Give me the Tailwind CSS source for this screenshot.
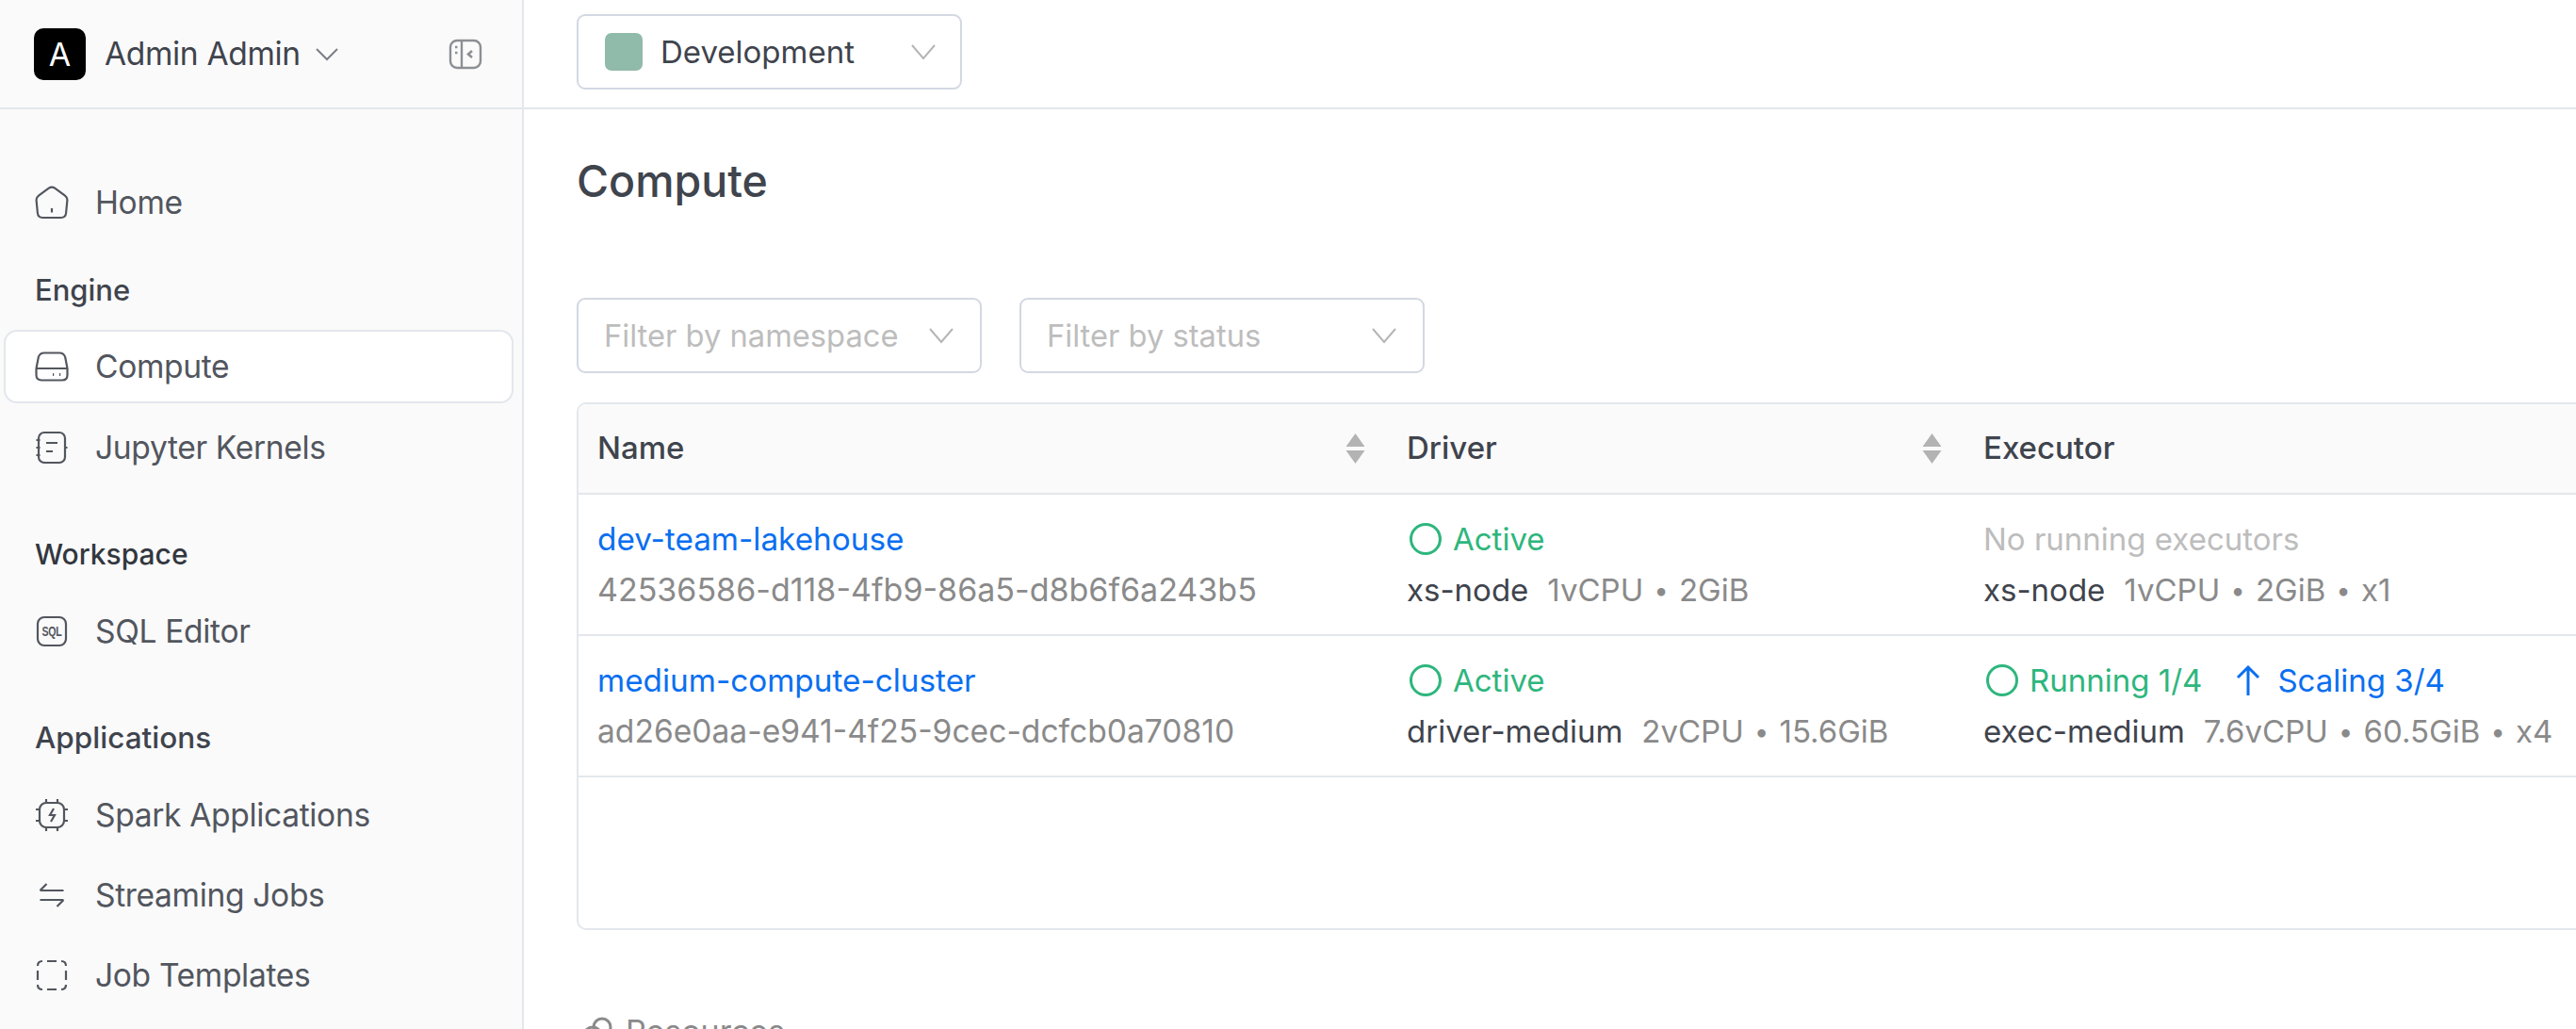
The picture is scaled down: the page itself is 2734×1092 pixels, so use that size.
<!DOCTYPE html>
<html lang="en">
<head>
    <meta charset="UTF-8">
    <title>Compute</title>
    <script src="https://cdn.jsdelivr.net/npm/@tailwindcss/browser@4"></script>
</head>
<body class="bg-white font-['Inter',sans-serif] text-[#3f444d] overflow-hidden">
    <div class="flex h-[1092px] w-[2734px] overflow-hidden">
        <!-- sidebar -->
        <aside class="w-[556px] shrink-0 bg-[#fafafa] border-r-2 border-[#e3e7ec]">
            <div class="h-[116px] flex items-center pl-[36px] pr-[42px] border-b-2 border-[#e3e7ec]">
                <div class="w-[55px] h-[55px] rounded-[10px] bg-black text-white text-[34px] flex items-center justify-center">A</div>
                <span class="ml-[20px] text-[33.6px] tracking-[-0.35px]">Admin Admin</span>
                <svg class="ml-[15px] w-[26px] h-[16px] text-[#7b7f85]" viewBox="0 0 26 16" fill="none" stroke="currentColor" stroke-width="2"><path d="M2 3l11 11L24 3"/></svg>
                <svg class="ml-auto w-[36px] h-[33px] text-[#8c8f94]" viewBox="0 0 36 33" fill="none" stroke="currentColor" stroke-width="2.4"><rect x="2" y="2" width="32" height="29" rx="7"/><path d="M14 2v29"/><path d="M7 9h2.500M7 15h2.500"/><path d="M25 13l-4 3.500 4 3.500" stroke-width="2.600"/></svg>
            </div>
            <nav class="pt-[77px] text-[33.6px] tracking-[-0.35px] text-[#52565e]">
                <a class="flex items-center h-[44px] pl-[37px] gap-[28px]">
                    <svg class="w-[36px] h-[36px]" viewBox="0 0 36 36" fill="none" stroke="currentColor" stroke-width="2.2"><path d="M14.500 2.800 4.300 10.300c-2 1.500-2.900 3-2.700 5.200l1.300 13.500c.3 3 2.200 5 5.300 5h19.600c3.100 0 5-2 5.300-5l1.300-13.500c.2-2.200-.7-3.700-2.700-5.200L21.500 2.800c-2.300-1.600-4.700-1.600-7 0z"/><path d="M18 24v4.500"/></svg>
                    Home
                </a>
                <div class="mt-[51px] pl-[37px] h-[40px] leading-[40px] text-[31px] tracking-normal font-medium text-[#3f444d]">Engine</div>
                <a class="mt-[22px] ml-[4px] mr-[9px] flex items-center h-[78px] pl-[31px] gap-[28px] bg-white border-2 border-[#e3e7ec] rounded-[14px]">
                    <svg class="w-[36px] h-[32px]" viewBox="0 0 36 32" fill="none" stroke="currentColor" stroke-width="2.2"><path d="M10 1.500h16c3 0 5.200 1.500 6.200 4.500L34.500 18v7c0 3.500-2 5.500-5.500 5.500H7c-3.500 0-5.500-2-5.500-5.500v-7L3.800 6c1-3 3.200-4.500 6.200-4.500z"/><path d="M1.500 18h33"/><path d="M19 24.500h1.200M26 24.500h1.200" stroke-width="3"/></svg>
                    Compute
                </a>
                <a class="mt-[8px] flex items-center h-[78px] pl-[37px] gap-[28px]">
                    <svg class="w-[36px] h-[36px]" viewBox="0 0 36 36" fill="none" stroke="currentColor" stroke-width="2.2"><rect x="4" y="2" width="28" height="32" rx="6"/><path d="M12 13h12M12 22h7"/><path d="M1.500 10h4M1.500 18h4M1.500 26h4M32 18h2.500"/></svg>
                    Jupyter Kernels
                </a>
                <div class="mt-[54px] pl-[37px] h-[40px] leading-[40px] text-[30px] tracking-normal font-medium text-[#33373e]">Workspace</div>
                <a class="mt-[23px] flex items-center h-[78px] pl-[37px] gap-[28px]">
                    <svg class="w-[36px] h-[34px]" viewBox="0 0 36 34" fill="none" stroke="currentColor" stroke-width="2.2"><rect x="3" y="2" width="30" height="30" rx="7"/><text x="18" y="22" text-anchor="middle" font-family="Liberation Sans" font-weight="700" font-size="14" textLength="21" lengthAdjust="spacingAndGlyphs" fill="currentColor" stroke="none">SQL</text></svg>
                    SQL Editor
                </a>
                <div class="mt-[54px] pl-[37px] h-[40px] leading-[40px] text-[31.500px] tracking-normal font-medium text-[#3f444d]">Applications</div>
                <a class="mt-[23px] flex items-center h-[78px] pl-[37px] gap-[28px]">
                    <svg class="w-[36px] h-[36px]" viewBox="0 0 36 36" fill="none" stroke="currentColor" stroke-width="2.2"><rect x="5" y="5" width="26" height="26" rx="7"/><path d="M12 1v4M24 1v4M12 31v4M24 31v4M1 12h4M1 24h4M31 12h4M31 24h4"/><path d="M20 11l-4 7h5l-4 7"/></svg>
                    Spark Applications
                </a>
                <a class="mt-[7px] flex items-center h-[78px] pl-[37px] gap-[28px]">
                    <svg class="w-[36px] h-[30px]" viewBox="0 0 36 30" fill="none" stroke="currentColor" stroke-width="2.2"><path d="M5.500 10h25M5.500 10l7-7M5.500 20h25M30.500 20l-7 7"/></svg>
                    Streaming Jobs
                </a>
                <a class="mt-[7px] flex items-center h-[78px] pl-[37px] gap-[28px]">
                    <svg class="w-[36px] h-[34px]" viewBox="0 0 36 34" fill="none" stroke="currentColor" stroke-width="2.2"><path d="M13 2h10M13 32h10M3 12v10M33 12v10M3 7c0-3 2-5 5-5M28 2c3 0 5 2 5 5M33 27c0 3-2 5-5 5M8 32c-3 0-5-2-5-5"/></svg>
                    Job Templates
                </a>
            </nav>
        </aside>
        <!-- main -->
        <main class="flex-1 min-w-0">
            <div class="h-[116px] flex items-center pl-[56px] border-b-2 border-[#e3e7ec]">
                <div class="mt-[-5px] w-[409px] h-[80px] flex items-center pl-[28px] pr-[26px] border-2 border-[#d3d8e2] rounded-[9px]">
                    <span class="w-[40px] h-[40px] rounded-[7px] bg-[#90baa9]"></span>
                    <span class="ml-[19px] mt-[2px] text-[33px]">Development</span>
                    <svg class="ml-auto w-[26px] h-[18px] text-[#b5b5b5]" viewBox="0 0 26 18" fill="none" stroke="currentColor" stroke-width="2"><path d="M1 2l12 14L25 2"/></svg>
                </div>
            </div>
            <div class="pl-[56px]">
                <h1 class="mt-[50px] h-[52px] leading-[52px] text-[46.500px] font-medium text-[#3f444d]">Compute</h1>
                <div class="mt-[98px] flex gap-[40px]">
                    <div class="w-[430px] h-[80px] flex items-center pl-[27px] pr-[28px] border-2 border-[#d3d8e2] rounded-[9px] text-[32.700px] text-[#bdbdbd]">
                        <span class="mt-[2px]">Filter by namespace</span>
                        <svg class="ml-auto w-[26px] h-[18px]" viewBox="0 0 26 18" fill="none" stroke="#b5b5b5" stroke-width="2"><path d="M1 2l12 14L25 2"/></svg>
                    </div>
                    <div class="w-[430px] h-[80px] flex items-center pl-[27px] pr-[28px] border-2 border-[#d3d8e2] rounded-[9px] text-[32.700px] text-[#bdbdbd]">
                        <span class="mt-[2px]">Filter by status</span>
                        <svg class="ml-auto w-[26px] h-[18px]" viewBox="0 0 26 18" fill="none" stroke="#b5b5b5" stroke-width="2"><path d="M1 2l12 14L25 2"/></svg>
                    </div>
                </div>
                <div class="mt-[31px] w-[2400px] h-[560px] border-2 border-[#e3e7ec] rounded-[10px] overflow-hidden">
                    <div class="h-[96px] grid grid-cols-[879px_612px_1fr] items-center bg-[#fafafa] border-b-2 border-[#e3e7ec] text-[33px] font-medium">
                        <div class="pl-[20px] pr-[43px] flex items-center justify-between">Name
                            <svg class="w-[23px] h-[34px]" viewBox="0 0 23 34" fill="#b3b3b3"><path d="M11.500 1l10 14h-20zM11.500 33l-10-14h20z"/></svg>
                        </div>
                        <div class="pr-[43px] flex items-center justify-between">Driver
                            <svg class="w-[23px] h-[34px]" viewBox="0 0 23 34" fill="#b3b3b3"><path d="M11.500 1l10 14h-20zM11.500 33l-10-14h20z"/></svg>
                        </div>
                        <div>Executor</div>
                    </div>
                    <div class="h-[150px] grid grid-cols-[879px_612px_1fr] border-b-2 border-[#e3e7ec] pt-[20px] text-[33px] leading-[54px]">
                        <div class="pl-[20px]">
                            <div class="text-[#0a6ff0] text-[33.300px]">dev-team-lakehouse</div>
                            <div class="text-[#8a8a8a] text-[34px]">42536586-d118-4fb9-86a5-d8b6f6a243b5</div>
                        </div>
                        <div>
                            <div class="flex items-center text-[#2eb67d]">
                                <svg class="ml-[2px] mr-[11px] w-[36px] h-[36px]" viewBox="0 0 36 36" fill="none" stroke="currentColor" stroke-width="3"><circle cx="18" cy="18" r="15.500"/></svg>
                                Active
                            </div>
                            <div>xs-node<span class="ml-[20px] text-[#8a8a8a]">1vCPU <span class="mx-[2px] text-[27px] align-[2px]">•</span> 2GiB</span></div>
                        </div>
                        <div>
                            <div class="text-[#bdbdbd]">No running executors</div>
                            <div>xs-node<span class="ml-[20px] text-[#8a8a8a]">1vCPU <span class="mx-[2px] text-[27px] align-[2px]">•</span> 2GiB <span class="mx-[2px] text-[27px] align-[2px]">•</span> x1</span></div>
                        </div>
                    </div>
                    <div class="h-[150px] grid grid-cols-[879px_612px_1fr] border-b-2 border-[#e3e7ec] pt-[20px] text-[33px] leading-[54px]">
                        <div class="pl-[20px]">
                            <div class="text-[#0a6ff0] text-[33.300px]">medium-compute-cluster</div>
                            <div class="text-[#8a8a8a] text-[33.600px]">ad26e0aa-e941-4f25-9cec-dcfcb0a70810</div>
                        </div>
                        <div>
                            <div class="flex items-center text-[#2eb67d]">
                                <svg class="ml-[2px] mr-[11px] w-[36px] h-[36px]" viewBox="0 0 36 36" fill="none" stroke="currentColor" stroke-width="3"><circle cx="18" cy="18" r="15.500"/></svg>
                                Active
                            </div>
                            <div>driver-medium<span class="ml-[20px] text-[#8a8a8a]">2vCPU <span class="mx-[2px] text-[27px] align-[2px]">•</span> 15.6GiB</span></div>
                        </div>
                        <div>
                            <div class="flex items-center">
                                <svg class="ml-[2px] mr-[11px] w-[36px] h-[36px] text-[#2eb67d]" viewBox="0 0 36 36" fill="none" stroke="currentColor" stroke-width="3"><circle cx="18" cy="18" r="15.500"/></svg>
                                <span class="text-[#2eb67d]">Running 1/4</span>
                                <svg class="ml-[34px] mr-[16px] w-[30px] h-[34px] text-[#0a6ff0]" viewBox="0 0 30 34" fill="none" stroke="currentColor" stroke-width="3"><path d="M15 33V3M4 14L15 3l11 11"/></svg>
                                <span class="text-[#0a6ff0]">Scaling 3/4</span>
                            </div>
                            <div>exec-medium<span class="ml-[20px] text-[#8a8a8a]">7.6vCPU <span class="mx-[2px] text-[27px] align-[2px]">•</span> 60.5GiB <span class="mx-[2px] text-[27px] align-[2px]">•</span> x4</span></div>
                        </div>
                    </div>
                </div>
                <div class="mt-[82px] ml-[6px] flex items-center gap-[14px] text-[34px] text-[#8a8a8a]">
                    <svg class="w-[32px] h-[34px]" viewBox="0 0 32 34" fill="none" stroke="currentColor" stroke-width="3"><circle cx="11" cy="21" r="9"/><circle cx="21" cy="12" r="9"/></svg>
                    Resources
                </div>
            </div>
        </main>
    </div>
</body>
</html>
